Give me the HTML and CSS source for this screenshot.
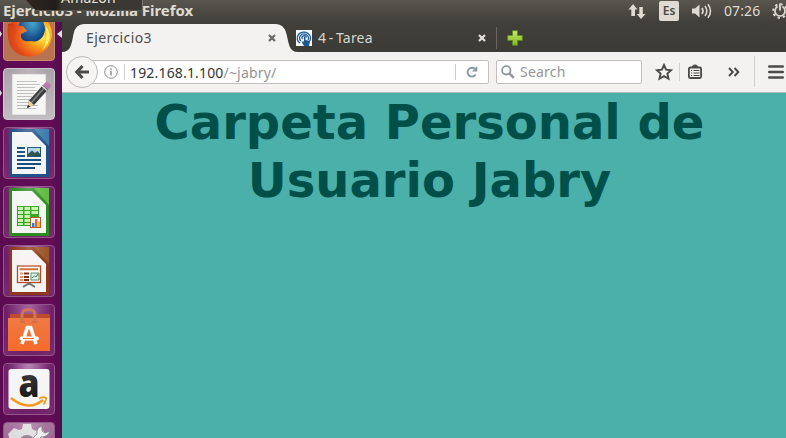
FILE: index.html
```html
<!DOCTYPE html>
<html lang="es">
<head>
<meta charset="utf-8">
<title>Ejercicio3</title>
<link rel="stylesheet" href="styles.css">
</head>
<body>
<svg class="defs" width="0" height="0" aria-hidden="true">
  <defs>
    <radialGradient id="fox" cx=".8" cy=".45" r=".85"><stop offset="0" stop-color="#ffe94a"/><stop offset=".3" stop-color="#fba51c"/><stop offset=".65" stop-color="#ed5c1b"/><stop offset="1" stop-color="#cf3515"/></radialGradient>
    <radialGradient id="globe" cx=".55" cy=".3" r=".75"><stop offset="0" stop-color="#2e9bc5"/><stop offset=".55" stop-color="#14518f"/><stop offset="1" stop-color="#0c2c66"/></radialGradient>
    <linearGradient id="bag" x1="0" y1="0" x2="0" y2="1"><stop offset="0" stop-color="#ef7a43"/><stop offset="1" stop-color="#f56a2b"/></linearGradient>
    <linearGradient id="plus" x1="0" y1="0" x2="0" y2="1"><stop offset="0" stop-color="#c6e86a"/><stop offset="1" stop-color="#7fb81c"/></linearGradient>
  </defs>
</svg>
<div class="desktop">
  <header class="panel">
    <span class="window-title">Ejercicio3 - Mozilla Firefox</span>
    <div class="indicators">
      <svg class="net" width="18" height="18" viewBox="0 0 18 18"><path d="M5 2 9.500 7.500H7V14H3.300V7.500H.5Z M13 17 8.700 12H11.300V5H14.800V12H17.500Z" fill="#dfdbd2"/></svg>
      <span class="lang">Es</span>
      <svg class="sound" width="21" height="18" viewBox="0 0 21 18"><path d="M0 6.500H3L7.500 2.500V15.500L3 11.500H0Z" fill="#dfdbd2"/><path d="M10 6q2 3 0 6" fill="none" stroke="#dfdbd2" stroke-width="1.700"/><path d="M13 4q3.600 5 0 10M16 2.200q5 6.800 0 13.600" fill="none" stroke="#dfdbd2" stroke-width="1.500"/></svg>
      <span class="clock">07:26</span>
      <svg class="power" width="18" height="18" viewBox="0 0 18 18"><circle cx="9" cy="9" r="6.800" fill="none" stroke="#dfdbd2" stroke-width="2" stroke-dasharray="2.400 2.940"/><path d="M6.600 4.600A5 5 0 1 0 11.400 4.600" fill="none" stroke="#dfdbd2" stroke-width="1.700"/><path d="M9 1.500V8.500" stroke="#dfdbd2" stroke-width="1.800"/></svg>
    </div>
  </header>
  <div class="tooltip"><span>Amazon</span></div>
  <div class="workspace">
    <nav class="launcher">
      <div class="tile firefox"><svg viewBox="0 0 52 52"><circle cx="27" cy="25.500" r="22" fill="url(#fox)"/><ellipse cx="28.500" cy="21" rx="13.500" ry="16" fill="url(#globe)"/><path d="M5 15C10 12 14 18 20 17L24 22 18 25C17 31 22 33 28 32 36 34 43 28 42 16 49 21 50 32 43 40 33 51 14 49 8 38 5 31 4 23 5 15Z" fill="url(#fox)"/><path d="M5 15C4 29 8 42 22 45 12 38 9 30 13 21Z" fill="#d94818" opacity=".5"/><path d="M42 16C49 23 48 34 39 41 45 32 44 24 42 16Z" fill="#ffef70"/></svg></div>
      <div class="tile editor"><svg viewBox="0 0 52 52"><path d="M9 6H43V47H9Z" fill="#f6f6f4" stroke="#bbb" stroke-width=".6"/><path d="M14 13.500H34M14 16.500H37M14 19.500H32M14 22.500H34M14 25.500H31M14 28.500H29M14 31.500H28M14 34.500H27M14 37.500H35M14 40.500H33" stroke="#b4b6b4" stroke-width=".9"/><path d="M24 40 26 32.500 40 17 45 21.500 31 37Z" fill="#3b3c3d"/><path d="M28 35 42 19" stroke="#7d7f80" stroke-width="1.500"/><path d="M24 40 26 32.500 31 37Z" fill="#e9d79a"/><path d="M24 40 25 36.800 27.200 38.800Z" fill="#222"/><path d="M40 17 43 14Q48 15 48 18.500L45 21.500Z" fill="#ba7bac"/><path d="M39 18 44 22.500" stroke="#ddd" stroke-width="1.500"/></svg></div>
      <div class="tile"><svg viewBox="0 0 52 52"><path d="M6 2H46V50H6Z" fill="#18578a" opacity=".9"/><path d="M31 2H46V19Z" fill="#3e7eae"/><path d="M9 5H29L43 19V47H9Z" fill="#f4f5f6"/><path d="M14 21H22M14 25H22M14 29H22M14 33H38M14 37H38M14 41H32" stroke="#144f80" stroke-width="2"/><rect x="24.500" y="20.500" width="13" height="9" fill="#a7d3ea" stroke="#17537f"/><path d="M25 29V27L29 23.500 32 26 34.500 24 37 27V29Z" fill="#294d47"/><circle cx="34.500" cy="22.700" r="1.200" fill="#f7e778"/></svg></div>
      <div class="tile"><svg viewBox="0 0 52 52"><path d="M6 2H46V50H6Z" fill="#269319" opacity=".95"/><path d="M31 2H46V19Z" fill="#63bc42"/><path d="M9 5H29L43 19V47H9Z" fill="#f4f6f3"/><path d="M14 20H36V40H14Z" fill="#36a423"/><path d="M15 21H20V24H15ZM21.500 21H27V24H21.500ZM28.500 21H35V24H28.500ZM15 25H20V28H15ZM21.500 25H27V28H21.500ZM28.500 25H35V28H28.500ZM15 29H20V32H15ZM21.500 29H27V32H21.500ZM15 33H20V36H15ZM21.500 33H27V36H21.500ZM15 37H20V39H15ZM21.500 37H27V39H21.500Z" fill="#c5f5ac"/><rect x="27.500" y="31.500" width="10" height="10" fill="#fff" stroke="#b85b34"/><path d="M29 37H31.500V41H29Z" fill="#2686bd"/><path d="M32 33H34.500V41H32Z" fill="#dd6a32"/><path d="M35 35.500H37V41H35Z" fill="#eeb93f"/></svg></div>
      <div class="tile"><svg viewBox="0 0 52 52"><path d="M6 2H46V50H6Z" fill="#8d3b16" opacity=".95"/><path d="M31 2H46V19Z" fill="#9c562a"/><path d="M9 5H29L43 19V47H9Z" fill="#f6f4f2"/><rect x="14.500" y="21" width="23" height="16.500" fill="#fff" stroke="#b5471d" stroke-width="1.300"/><path d="M16.500 24.200H35" stroke="#ce6a31" stroke-width="2"/><path d="M17 28.500H20M17 32H20M17 35H20" stroke="#e58d66" stroke-width="2"/><path d="M21 28.500H26M21 32H26M21 35H26" stroke="#7c2d0d" stroke-width="2"/><path d="M28 28H36V35H28Z" fill="#edf7ea" stroke="#4c876d"/><path d="M29 33 31.500 31 33 32 35 29" fill="none" stroke="#2b8358"/><path d="M26 38V39.500M20 42 25 39H27L32 42" fill="none" stroke="#69716c" stroke-width="1.800"/></svg></div>
      <div class="tile bag"><svg viewBox="0 0 52 52"><path d="M7 10H47V15H7Z" fill="#b94d2e"/><path d="M5 14H47V47H5Z" fill="url(#bag)"/><path d="M19 17V11Q19 5.500 25.500 5.500T32 11V17" fill="none" stroke="#cf7559" stroke-width="3"/><path d="M17 18H22M29 18H34" stroke="#d66c45" stroke-width="2"/><path d="M19 40 24.300 23.500H27.700L33 40" fill="none" stroke="#fff" stroke-width="3.600"/><path d="M18.500 34.500H34" stroke="#fff" stroke-width="3.800" stroke-linecap="round"/><path d="M20 34.500H31" stroke="#f26f34" stroke-width="1.200"/></svg></div>
      <div class="tile"><svg viewBox="0 0 52 52"><rect x="5.500" y="6" width="41" height="40" rx="3" fill="#f5f5f5"/><text class="amazon-a" x="15.500" y="33.500" textLength="21" lengthAdjust="spacingAndGlyphs">a</text><path d="M8 35Q25 49 40 37" fill="none" stroke="#f7981d" stroke-width="2.500"/><path d="M36 35.500Q41 33 43 35 43.500 37 40.500 41.500" fill="none" stroke="#f7981d" stroke-width="1.800"/></svg></div>
      <div class="tile settings"><svg viewBox="0 0 52 52"><path d="M20 2H28L29 7 33 9 38 6 43 12 39 17V30H7V18L5 12 11 6 16 8 19 7Z" fill="#dedddd"/><circle cx="24" cy="21" r="8" fill="#8f738a"/><path d="M39 4Q33 6 34 12L28 18 31 22 38 15Q45 15 47 9L42 11 39 9Z" fill="#eee" stroke="#8b8188"/></svg></div>
      <i class="pip pip-active"></i><i class="pip pip-focus"></i><i class="pip pip-editor"></i>
    </nav>
    <main class="browser">
      <div class="tabs">
        <div class="tab active">
          <svg class="tab-shape" width="236" height="28" viewBox="0 0 236 28"><path d="M0 28C9 28 9.500 20 11.500 10Q13.500 0 22 0H214Q222 0 224.500 10C227 20 227 28 236 28Z" fill="#f3f2f1"/></svg>
          <span class="tab-name first">Ejercicio3</span>
          <svg class="close" width="8" height="8" viewBox="0 0 8 8"><path d="M1 1 7 7M7 1 1 7" stroke="#696866" stroke-width="2.200"/></svg>
        </div>
        <div class="tab inactive">
          <svg width="16" height="16" viewBox="0 0 16 16"><path d="M0 0H16V16H0Z" fill="#f6fafc"/><g fill="none" stroke="#205c98" stroke-width="1.300"><path d="M4 13A6.700 6 0 1 1 13 12"/><path d="M5 11A4.500 4 0 1 1 12 10"/><path d="M6.500 9A2.300 2 0 1 1 10.500 7.500"/></g><path d="M8 6.500 9.500 7V10L14 11 13 16H8L5.500 11.500H8Z" fill="#1b5791"/></svg>
          <span class="tab-name second">4 - Tarea</span>
          <svg class="close" width="8" height="8" viewBox="0 0 8 8"><path d="M1 1 7 7M7 1 1 7" stroke="#e5e2dc" stroke-width="2.200"/></svg>
        </div>
        <svg class="new-tab" width="16" height="16" viewBox="0 0 16 16"><path d="M5.500.7H10.500V5.500H15.300V10.500H10.500V15.300H5.500V10.500H.7V5.500H5.500Z" fill="url(#plus)" stroke="#5d8c19" stroke-width=".8"/></svg>
      </div>
      <div class="toolbar">
        <div class="back"><svg width="16" height="16" viewBox="0 0 16 16"><path d="M8.500 2 2.800 8 8.500 14M3.500 8H15" fill="none" stroke="#4b4a48" stroke-width="3.200"/></svg></div>
        <div class="address">
          <svg class="info" width="14" height="14" viewBox="0 0 14 14"><circle cx="7" cy="7" r="6.300" fill="none" stroke="#8c8c8c"/><path d="M7 6V10.500M7 3.300V4.700" stroke="#858585" stroke-width="1.400"/></svg>
          <span class="url"><b>192.168.1.100</b>/~jabry/</span>
          <span class="reload"><svg width="12" height="12" viewBox="0 0 12 12"><path d="M9.700 8.500A4.400 4.400 0 1 1 8.800 2.800" fill="none" stroke="#8598a3" stroke-width="1.900"/><path d="M11.300 0V5.500H6Z" fill="#8598a3"/></svg></span>
        </div>
        <div class="search"><svg width="14" height="14" viewBox="0 0 14 14"><circle cx="5.300" cy="5.300" r="4.200" fill="none" stroke="#92989b" stroke-width="1.800"/><path d="M8.500 8.500 12.800 12.800" stroke="#92989b" stroke-width="2.500"/></svg><span>Search</span></div>
        <div class="actions">
          <svg class="star" width="18" height="18" viewBox="0 0 18 18"><path d="M9 2 11.100 6.700 16.200 7.200 12.400 10.600 13.500 15.700 9 13.100 4.500 15.700 5.600 10.600 1.800 7.200 6.900 6.700Z" fill="none" stroke="#4b4a48" stroke-width="1.900"/></svg>
          <i class="rule short"></i>
          <svg class="list" width="14" height="15" viewBox="0 0 14 15"><rect x=".9" y="3.500" width="12.200" height="10.500" rx="1.500" fill="none" stroke="#4b4a48" stroke-width="1.800"/><path d="M4 3Q4 1 7 .5 10 1 10 3Z" fill="#4b4a48"/><path d="M3 6.500H4.200M5.500 6.500H11.500M3 9H4.200M5.500 9H11.500M3 11.500H4.200M5.500 11.500H11.500" stroke="#4b4a48" stroke-width="1.100"/></svg>
          <svg class="more" width="12" height="10" viewBox="0 0 12 10"><path d="M1 1 4.800 5 1 9M6.500 1 10.300 5 6.500 9" fill="none" stroke="#4b4a48" stroke-width="2"/></svg>
          <i class="rule tall"></i>
          <svg class="menu" width="16" height="14" viewBox="0 0 16 14"><path d="M1.300 1.500H14.700M1.300 7H14.700M1.300 12.500H14.700" stroke="#4b4a48" stroke-width="2.600" stroke-linecap="round"/></svg>
        </div>
      </div>
      <section class="page"><h1>Carpeta Personal de<br>Usuario Jabry</h1></section>
    </main>
  </div>
</div>
</body>
</html>
```
FILE: styles.css
```css
* { box-sizing: border-box; }
body { margin: 0; overflow: hidden; font-family: "Noto Sans", sans-serif; }
svg { display: block; flex: none; }
.defs { position: absolute; }
.desktop { position: relative; width: 786px; height: 438px; overflow: hidden; display: flex; flex-direction: column; }
.panel { height: 22px; flex: none; display: flex; justify-content: space-between; background: linear-gradient(#59564e, #403f39); color: #dfdbd2; }
.window-title { padding-left: 3px; font-size: 15px; font-weight: 700; line-height: 20px; letter-spacing: -.07px; white-space: nowrap; }
.indicators { display: flex; align-items: center; width: 158px; height: 21px; flex: none; }
.lang { width: 20px; height: 20px; margin-left: 13px; border-radius: 2px; background: #dfdbd2; color: #4b4943; font-size: 12px; font-weight: 600; line-height: 20px; text-align: center; }
.sound { margin-left: 13px; }
.clock { width: 37px; margin-left: 11px; font-size: 14px; line-height: 20px; letter-spacing: .1px; white-space: nowrap; }
.indicators > * { flex: none; }
.power { margin-left: 10px; }
.tooltip { position: absolute; z-index: 3; left: 26px; top: 0; width: 117px; height: 11px; overflow: hidden; background: linear-gradient(90deg, #30261e 0, #211d1b 30px, #393832 36px); border-right: 1px solid #77746b; border-bottom: 1px solid #55534c; border-bottom-right-radius: 3px; clip-path: polygon(0 0, 100% 0, 100% 100%, 10px 100%); }
.tooltip span { display: block; margin: -12px 0 0 35px; font-size: 14px; line-height: 20px; letter-spacing: .2px; color: #e8e5df; }
.workspace { display: flex; flex: 1; min-height: 0; }
.launcher { position: relative; width: 62px; flex: none; overflow: hidden; padding-left: 3px; display: flex; flex-direction: column; gap: 7px; background: linear-gradient(90deg, #5b0b51, #650d59 80%, #50104b); }
.tile { position: relative; width: 52px; height: 52px; flex: none; border-radius: 4px; overflow: hidden; border: 1px solid #94578b; background: radial-gradient(ellipse at 50% 0, #a765a2, #6f2068 65%, #792a70); }
.tile::after { content: ""; position: absolute; inset: 0; background: radial-gradient(ellipse at 50% 0, rgba(255,255,255,.2), transparent 50%); }
.tile svg { width: 52px; height: 52px; margin: -1px; }
.tile:first-child { margin-top: -13px; }
.firefox { background: #b87452; border-color: #c98a6b; }
.editor { background: linear-gradient(#aaa3a9, #c2bdc1); border-color: #cdc6cc; }
.settings { background: linear-gradient(#a7769f, #8d5586); }
.bag::after { display: none; }
.amazon-a { font: 800 38px "Open Sans", sans-serif; fill: #191919; }
.pip { position: absolute; width: 0; height: 0; border: 3px solid transparent; }
.pip-active { left: 0; top: 9px; border-left: 2px solid #ddd; border-right: 0; }
.pip-focus { left: 57px; top: 8px; border-width: 4px; border-right: 5px solid #e7dce5; border-left: 0; }
.pip-editor { left: 0; top: 68px; border-left: 2px solid #ddd; border-right: 0; }
.browser { flex: 1; min-width: 0; display: flex; flex-direction: column; }
.tabs { height: 30px; flex: none; display: flex; align-items: center; padding-top: 2px; background: linear-gradient(#403f39, #3c3b37); }
.tab { height: 28px; display: flex; align-items: center; }
.active { position: relative; width: 236px; padding: 0 22px 0 24px; justify-content: space-between; }
.tab-shape { position: absolute; left: 0; top: 0; }
.active > :not(.tab-shape) { position: relative; }
.inactive { width: 201px; height: 22px; padding-right: 10px; margin-left: -2px; border-right: 1px solid #6a6861; }
.inactive .close { margin-left: auto; }
.tab-name { font-size: 14px; line-height: 20px; color: #4c4b49; white-space: nowrap; }
.first { letter-spacing: .4px; }
.second { margin-left: 6px; color: #d9d6d0; letter-spacing: .2px; word-spacing: -1.3px; }
.new-tab { margin-left: 10px; }
.toolbar { height: 41px; flex: none; display: flex; align-items: center; padding: 0 0 1px 4px; background: #f3f2f1; border-bottom: 1px solid #b5b9b6; }
.back { position: relative; z-index: 1; width: 32px; height: 32px; flex: none; display: grid; place-items: center; border: 1px solid #bdbab7; border-radius: 50%; background: #f5f4f3; }
.address { width: 407px; height: 24px; margin-left: -16px; flex: none; display: flex; align-items: center; padding-left: 21px; border: 1px solid #c5bebe; border-radius: 2px; background: #fff; }
.url { height: 16px; margin-left: 6px; padding-left: 5px; border-left: 1px solid #d0d0d0; font-size: 14px; line-height: 18px; letter-spacing: .17px; color: #959595; white-space: nowrap; }
.url b { font-weight: 400; color: #343434; }
.reload { width: 33px; height: 16px; margin-left: auto; padding-left: 10px; display: flex; align-items: center; border-left: 1px solid #ccc; }
.search { width: 146px; height: 24px; margin-left: 7px; flex: none; display: flex; align-items: center; gap: 5px; padding-left: 4px; border: 1px solid #c5bebe; border-radius: 2px; background: #fff; font-size: 14px; color: #959595; }
.search span { line-height: 18px; padding-top: 1px; letter-spacing: .2px; }
.actions { display: flex; align-items: center; margin-left: 13px; }
.rule { width: 1px; background: #d3d1cf; }
.short { height: 18px; margin-left: 6px; }
.list { margin-left: 8px; }
.more { margin-left: 26px; }
.tall { height: 31px; margin-left: 14px; }
.menu { margin-left: 13px; }
.page { flex: 1; background: #4cb0aa; }
h1 { margin: 0; padding-left: 11px; font: 700 48px/58px "DejaVu Sans", sans-serif; color: #004f49; text-align: center; white-space: nowrap; }
```
